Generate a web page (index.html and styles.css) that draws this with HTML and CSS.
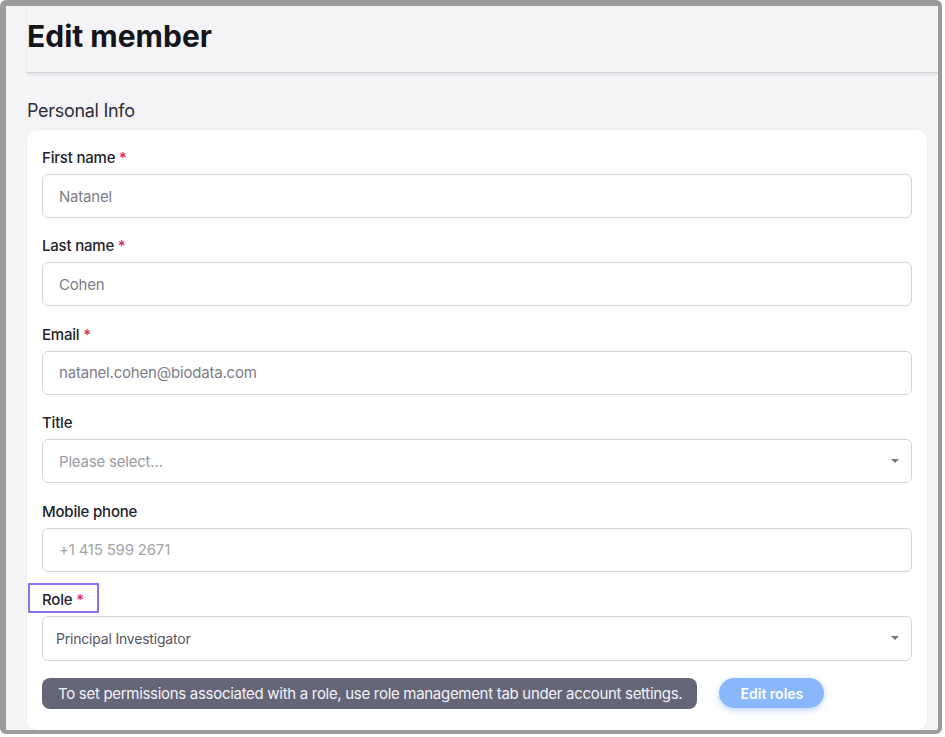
FILE: index.html
```html
<!DOCTYPE html>
<html lang="en">
<head>
<meta charset="utf-8">
<title>Edit member</title>
<link rel="stylesheet" href="styles.css">
</head>
<body>
<div class="frame">
  <header class="page-header">
    <h1 class="page-title">Edit member</h1>
  </header>
  <h2 class="section-title">Personal Info</h2>
  <section class="card">
    <div class="field">
      <label class="label">First name <span class="req">*</span></label>
      <div class="input"><span class="value">Natanel</span></div>
    </div>
    <div class="field">
      <label class="label">Last name <span class="req">*</span></label>
      <div class="input"><span class="value">Cohen</span></div>
    </div>
    <div class="field">
      <label class="label">Email <span class="req">*</span></label>
      <div class="input"><span class="value">natanel.cohen@biodata.com</span></div>
    </div>
    <div class="field">
      <label class="label">Title</label>
      <div class="input select"><span class="placeholder">Please select...</span><span class="caret"></span></div>
    </div>
    <div class="field">
      <label class="label">Mobile phone</label>
      <div class="input"><span class="placeholder light">+1 415 599 2671</span></div>
    </div>
    <div class="field field-role">
      <label class="label highlighted">Role <span class="req">*</span></label>
      <div class="input select role-select"><span class="role-value">Principal Investigator</span><span class="caret"></span></div>
    </div>
    <div class="actions">
      <div class="hint">To set permissions associated with a role, use role management tab under account settings.</div>
      <button class="btn-edit" type="button">Edit roles</button>
    </div>
  </section>
</div>
</body>
</html>
```
FILE: styles.css
```css
html, body {
  margin: 0;
  padding: 0;
  background: #ffffff;
}
body {
  font-family: "Inter", "Lato", "Liberation Sans", sans-serif;
}
.frame {
  width: 942px;
  height: 734px;
  box-sizing: border-box;
  border-style: solid;
  border-color: #9b9b9b;
  border-width: 6px 4px 4px 6px;
  border-radius: 6px;
  background: #f4f4f6;
  overflow: hidden;
  display: flex;
  flex-direction: column;
}
.page-header {
  margin-left: 21px;
  height: 67px;
  flex: none;
  box-sizing: border-box;
  padding-top: 11px;
  border-bottom: 1px solid #d2d2d6;
  box-shadow: 0 2px 3px rgba(0, 0, 0, 0.07);
}
.page-title {
  margin: 0;
  font-size: 30px;
  line-height: 38px;
  font-weight: 700;
  color: #14141c;
  letter-spacing: 0;
}
.section-title {
  margin: 26px 0 0 21px;
  font-size: 18px;
  line-height: 24px;
  font-weight: 400;
  color: #2e2e36;
  letter-spacing: -0.3px;
  flex: none;
}
.card {
  margin: 7px 11px 0 21px;
  background: #ffffff;
  border-radius: 10px;
  padding: 18px 15px 0 15px;
  flex: 1;
  box-shadow: 0 0 3px rgba(0, 0, 0, 0.04);
}
.field {
  display: flex;
  flex-direction: column;
  margin-bottom: 18.4px;
}
.label {
  align-self: flex-start;
  font-size: 15px;
  line-height: 20px;
  font-weight: 500;
  color: #23232b;
  margin-bottom: 6px;
  letter-spacing: -0.2px;
}
.req {
  color: #e0245e;
}
.input {
  height: 44px;
  box-sizing: border-box;
  border: 1px solid #d3d1dd;
  border-radius: 6px;
  display: flex;
  align-items: center;
  padding: 0 16px;
  font-size: 15px;
  letter-spacing: -0.2px;
}
.value {
  color: #7d7d88;
}
.placeholder {
  color: #9a9aa2;
}
.placeholder.light {
  color: #a3a3aa;
}
.select {
  justify-content: space-between;
  padding-right: 12px;
}
.caret {
  width: 0;
  height: 0;
  border-left: 4px solid transparent;
  border-right: 4px solid transparent;
  border-top: 4px solid #77777f;
}
.field-role {
  margin-bottom: 17px;
}
.highlighted {
  position: relative;
}
.highlighted::before {
  content: "";
  position: absolute;
  top: -7px;
  bottom: -3px;
  left: -14px;
  right: -15px;
  border: 2px solid #8a6ff3;
}
.role-select {
  height: 45px;
  padding-left: 13px;
}
.role-value {
  font-size: 14px;
  color: #55555e;
}
.actions {
  display: flex;
  align-items: center;
  gap: 22px;
}
.hint {
  background: #646577;
  color: #f4f4f8;
  font-size: 15px;
  line-height: 31px;
  height: 31px;
  padding: 0 15px 0 16px;
  border-radius: 8px;
  letter-spacing: -0.3px;
}
.btn-edit {
  width: 105px;
  height: 30px;
  border: none;
  border-radius: 15px;
  background: #89b7fb;
  color: #ffffff;
  font-family: inherit;
  font-size: 14px;
  font-weight: 600;
  box-shadow: 0 2px 6px rgba(100, 160, 255, 0.45);
  cursor: pointer;
}
```
